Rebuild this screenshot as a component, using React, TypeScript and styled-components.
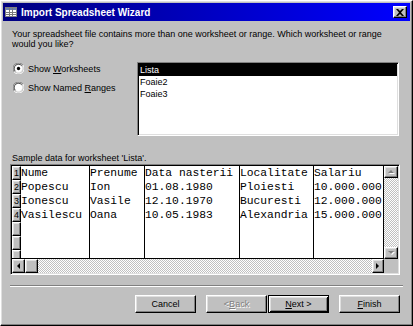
import React from 'react';
import styled, { createGlobalStyle, css } from 'styled-components';

// Global
const GlobalStyle = createGlobalStyle`
  html, body {
    margin: 0;
    padding: 0;
    background: #c0c0c0;
  }
  body {
    width: 413px;
    height: 326px;
    overflow: hidden;
    font-family: "Liberation Sans", Arial, sans-serif;
    font-size: 9px;
    color: #000;
  }
`;

// bevels
const raised = css`
  border: 1px solid;
  border-color: #fff #000 #000 #fff;
  box-shadow: inset -1px -1px #808080, inset 1px 1px #dfdfdf;
`;

const sunken = css`
  border: 1px solid;
  border-color: #808080 #fff #fff #808080;
  box-shadow: inset 1px 1px #000, inset -1px -1px #dfdfdf;
  padding: 1px;
`;

const Window = styled.div`
  box-sizing: border-box;
  width: 413px;
  height: 326px;
  background: #c0c0c0;
  ${raised};
  padding: 2px;
  display: flex;
  flex-direction: column;
`;

const TitleBar = styled.div`
  height: 18px;
  display: flex;
  align-items: center;
  padding: 0 3px 0 2px;
  background: linear-gradient(90deg, #000080 0%, #0000c8 55%, #0000ff 100%);
  color: #fff;
  font-weight: bold;
  font-size: 10px;
`;

const TitleText = styled.span`
  margin-left: 4px;
  flex: 1;
`;

const CloseButton = styled.div`
  box-sizing: border-box;
  width: 14px;
  height: 12px;
  background: #c0c0c0;
  ${raised};
  display: flex;
  align-items: center;
  justify-content: center;
`;

const Body = styled.div`
  flex: 1;
  display: flex;
  flex-direction: column;
  padding: 0 7px;
`;

const Prompt = styled.p`
  margin: 8px 0 0;
  padding-left: 2px;
  line-height: 10px;
`;

const ChoiceRow = styled.div`
  display: flex;
  margin-top: 13px;
`;

const RadioGroup = styled.div`
  width: 124px;
  padding-left: 3px;
  display: flex;
  flex-direction: column;
  gap: 6px;
`;

const RadioItem = styled.label`
  height: 13px;
  display: flex;
  align-items: center;
  gap: 4px;
`;

const ListBox = styled.div`
  box-sizing: border-box;
  width: 262px;
  height: 74px;
  background: #fff;
  ${sunken};
`;

const ListItem = styled.div<{ $selected?: boolean }>`
  height: 12px;
  line-height: 12px;
  padding-left: 1px;
  background: ${(p) => (p.$selected ? '#000' : 'transparent')};
  color: ${(p) => (p.$selected ? '#fff' : '#000')};
`;

const SampleLabel = styled.div`
  margin-top: 17px;
  padding-left: 2px;
  line-height: 11px;
`;

const Frame = styled.div`
  box-sizing: border-box;
  width: 390px;
  height: 111px;
  ${sunken};
  display: grid;
  grid-template-columns: 372px 14px;
  grid-template-rows: 93px 14px;
  background: #c0c0c0;
`;

const CellArea = styled.div`
  display: flex;
  background: #fff;
  border-bottom: 1px solid #000;
  overflow: hidden;
`;

const RowHeaders = styled.div`
  width: 9px;
  flex: none;
  display: flex;
  flex-direction: column;
`;

const HeaderCell = styled.div`
  box-sizing: border-box;
  height: 14px;
  flex: none;
  background: #c0c0c0;
  ${raised};
  font-size: 9px;
  line-height: 12px;
  text-align: center;
`;

const DataColumn = styled.div<{ $w: number }>`
  width: ${(p) => p.$w}px;
  flex: none;
  border-right: 1px solid #000;
  font-family: "Liberation Mono", "Courier New", monospace;
  font-size: 11.3px;
  white-space: nowrap;
  overflow: hidden;
`;

const DataCell = styled.div`
  height: 14px;
  line-height: 14px;
`;

const VScroll = styled.div`
  display: flex;
  flex-direction: column;
  background: repeating-conic-gradient(#c0c0c0 0 25%, #fff 0 50%) 0 0 / 2px 2px;
`;

const HScroll = styled.div`
  display: flex;
  background: repeating-conic-gradient(#c0c0c0 0 25%, #fff 0 50%) 0 0 / 2px 2px;
`;

const Track = styled.div`
  flex: 1;
`;

const ScrollButton = styled.div<{ $w: number; $h: number }>`
  box-sizing: border-box;
  width: ${(p) => p.$w}px;
  height: ${(p) => p.$h}px;
  flex: none;
  background: #c0c0c0;
  ${raised};
  display: flex;
  align-items: center;
  justify-content: center;
`;

const Corner = styled.div`
  background: #c0c0c0;
`;

const Separator = styled.div`
  margin: 10px 0 0;
  border-top: 1px solid #808080;
  border-bottom: 1px solid #fff;
`;

const ButtonRow = styled.div`
  display: flex;
  justify-content: flex-end;
  margin-top: 8px;
  padding-right: 3px;
`;

const PushButton = styled.div<{ $default?: boolean; $disabled?: boolean; $gap?: number }>`
  box-sizing: border-box;
  width: 61px;
  height: 18px;
  margin-left: ${(p) => p.$gap ?? 10}px;
  display: flex;
  align-items: center;
  justify-content: center;
  background: #c0c0c0;
  color: ${(p) => (p.$disabled ? '#808080' : '#000')};
  text-shadow: ${(p) => (p.$disabled ? '1px 1px #fff' : 'none')};
  ${(p) =>
    p.$default
      ? css`
          border: 1px solid #000;
          box-shadow: inset 1px 1px #fff, inset -1px -1px #000, inset 2px 2px #dfdfdf, inset -2px -2px #808080;
        `
      : raised};
`;

// icons
const AppIcon = () => (
  <svg width="12" height="10" viewBox="0 0 12 10">
    <rect x="0.5" y="0.5" width="11" height="9" fill="#fff" stroke="#808080" />
    <rect x="1" y="1" width="10" height="2" fill="#6b7fb0" />
    <path d="M1 5.5h10M1 7.5h10M4.5 1v8M7.5 1v8" stroke="#7a7a7a" strokeWidth="1" />
  </svg>
);

const CloseIcon = () => (
  <svg width="8" height="7" viewBox="0 0 8 7">
    <path d="M0 0h2l2 2 2-2h2L5 3.5 8 7H6L4 5 2 7H0l3-3.5z" fill="#000" />
  </svg>
);

const Radio = ({ checked }: { checked?: boolean }) => (
  <svg width="11" height="11" viewBox="0 0 12 12">
    <path d="M11 2.5A6 6 0 0 0 1 9.5" fill="none" stroke="#808080" strokeWidth="1" />
    <path d="M1.2 9.8A6 6 0 0 0 10.8 2.2" fill="none" stroke="#fff" strokeWidth="1" />
    <circle cx="6" cy="6" r="4.5" fill="#fff" stroke="#dfdfdf" strokeWidth="0.6" />
    <path d="M9.5 3A4.6 4.6 0 0 0 2.4 9" fill="none" stroke="#404040" strokeWidth="1" />
    {checked && <circle cx="6" cy="6" r="1.8" fill="#000" />}
  </svg>
);

const Arrow = ({ dir, disabled }: { dir: 'up' | 'down' | 'left' | 'right'; disabled?: boolean }) => {
  const pts = {
    up: '0,3 3,0 6,3',
    down: '0,0 6,0 3,3',
    left: '3,0 3,6 0,3',
    right: '0,0 0,6 3,3',
  }[dir];
  const vertical = dir === 'up' || dir === 'down';
  return (
    <svg width={vertical ? 7 : 4} height={vertical ? 4 : 7} viewBox={vertical ? '0 0 7 4' : '0 0 4 7'}>
      {disabled && <polygon points={pts} fill="#fff" transform="translate(1 1)" />}
      <polygon points={pts} fill={disabled ? '#808080' : '#000'} />
    </svg>
  );
};

// data
const columns = [
  { w: 68, cells: ['Nume', 'Popescu', 'Ionescu', 'Vasilescu'] },
  { w: 54, cells: ['Prenume', 'Ion', 'Vasile', 'Oana'] },
  { w: 94, cells: ['Data nasterii', '01.08.1980', '12.10.1970', '10.05.1983'] },
  { w: 73, cells: ['Localitate', 'Ploiesti', 'Bucuresti', 'Alexandria'] },
  { w: 69, cells: ['Salariu', '10.000.000', '12.000.000', '15.000.000'] },
];

const rowLabels = ['1', '2', '3', '4', '', '', ''];

export default function App() {
  return (
    <>
      <GlobalStyle />
      <Window>
        <TitleBar>
          <AppIcon />
          <TitleText>Import Spreadsheet Wizard</TitleText>
          <CloseButton>
            <CloseIcon />
          </CloseButton>
        </TitleBar>
        <Body>
          <Prompt>
            Your spreadsheet file contains more than one worksheet or range. Which worksheet or range
            <br />
            would you like?
          </Prompt>
          <ChoiceRow>
            <RadioGroup>
              <RadioItem>
                <Radio checked />
                <span>Show <u>W</u>orksheets</span>
              </RadioItem>
              <RadioItem>
                <Radio />
                <span>Show Named <u>R</u>anges</span>
              </RadioItem>
            </RadioGroup>
            <ListBox>
              <ListItem $selected>Lista</ListItem>
              <ListItem>Foaie2</ListItem>
              <ListItem>Foaie3</ListItem>
            </ListBox>
          </ChoiceRow>
          <SampleLabel>Sample data for worksheet 'Lista'.</SampleLabel>
          <Frame>
            <CellArea>
              <RowHeaders>
                {rowLabels.map((l, i) => (
                  <HeaderCell key={i}>{l}</HeaderCell>
                ))}
              </RowHeaders>
              {columns.map((c) => (
                <DataColumn key={c.cells[0]} $w={c.w}>
                  {c.cells.map((t) => (
                    <DataCell key={t}>{t}</DataCell>
                  ))}
                </DataColumn>
              ))}
            </CellArea>
            <VScroll>
              <ScrollButton $w={14} $h={12}>
                <Arrow dir="up" disabled />
              </ScrollButton>
              <Track />
              <ScrollButton $w={14} $h={12}>
                <Arrow dir="down" disabled />
              </ScrollButton>
            </VScroll>
            <HScroll>
              <ScrollButton $w={13} $h={14}>
                <Arrow dir="left" />
              </ScrollButton>
              <ScrollButton $w={13} $h={14} />
              <Track />
              <ScrollButton $w={12} $h={14}>
                <Arrow dir="right" />
              </ScrollButton>
            </HScroll>
            <Corner />
          </Frame>
          <Separator />
          <ButtonRow>
            <PushButton>Cancel</PushButton>
            <PushButton $disabled>
              &lt; <u>B</u>ack
            </PushButton>
            <PushButton $default $gap={1}>
              <span>
                <u>N</u>ext &gt;
              </span>
            </PushButton>
            <PushButton>
              <span>
                <u>F</u>inish
              </span>
            </PushButton>
          </ButtonRow>
        </Body>
      </Window>
    </>
  );
}
